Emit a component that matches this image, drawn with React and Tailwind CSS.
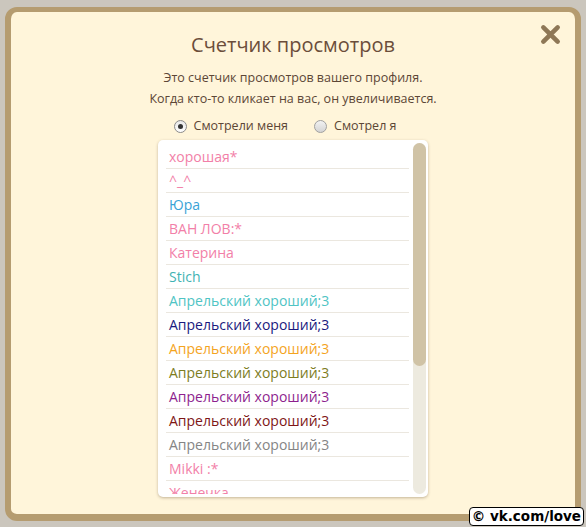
export default function App() {
  const rows = [
    ["хорошая*", "text-[#f27fa8]"],
    ["^_^", "text-[#f27fa8]"],
    ["Юра", "text-[#3aa3d6]"],
    ["ВАН ЛОВ:*", "text-[#f27fa8]"],
    ["Катерина", "text-[#f27fa8]"],
    ["Stich", "text-[#3fb3b3]"],
    ["Апрельский хороший;3", "text-[#4fc4c4]"],
    ["Апрельский хороший;3", "text-[#1a1a7e]"],
    ["Апрельский хороший;3", "text-[#f4a41e]"],
    ["Апрельский хороший;3", "text-[#7d7d1e]"],
    ["Апрельский хороший;3", "text-[#8e1f8e]"],
    ["Апрельский хороший;3", "text-[#7e1616]"],
    ["Апрельский хороший;3", "text-[#858585]"],
    ["Mikki :*", "text-[#f27fa8]"],
    ["Женечка", "text-[#f27fa8]"],
  ];
  return (
    <div
      className="relative w-[586px] h-[527px] overflow-hidden bg-[#cbc6bd] pt-[7px] pl-[5px]"
      style={{ fontFamily: '"Open Sans", "Noto Sans", sans-serif' }}
    >
      <div className="relative w-[576px] h-[514px] rounded-[12px] border-[6px] border-t-[5px] border-b-[7px] border-[#b59c70] bg-[#fff5da] flex flex-col items-center">
        <button className="absolute right-[13px] top-[10px] w-[24px] h-[24px] flex items-center justify-center">
          <svg width="21" height="21" viewBox="0 0 22 22">
            <path d="M3.5 3.5 L18.5 18.5 M18.5 3.5 L3.5 18.5" stroke="#8e7756" strokeWidth="4.8" strokeLinecap="round" />
          </svg>
        </button>
        <h1 className="mt-[19px] text-[20px] leading-[28px] text-[#6b4d3a]">Счетчик просмотров</h1>
        <p className="mt-[8px] text-[12.5px] leading-[21px] text-[#5c4636] text-center">
          Это счетчик просмотров вашего профиля.
          <br />
          Когда кто-то кликает на вас, он увеличивается.
        </p>
        <div className="mt-[7px] mr-[16px] flex items-center text-[12.5px] leading-[20px] text-[#5c4636]">
          <label className="flex items-center gap-[7px]">
            <span className="w-[13px] h-[13px] rounded-full border border-[#8a8a8a] bg-gradient-to-b from-[#e8e8e8] to-white flex items-center justify-center">
              <span className="w-[5px] h-[5px] rounded-full bg-[#333]" />
            </span>
            Смотрели меня
          </label>
          <label className="ml-[26px] flex items-center gap-[7px]">
            <span className="w-[13px] h-[13px] rounded-full border border-[#a0a0a0] bg-gradient-to-b from-[#f2f2f2] to-[#d4d4d4]" />
            Смотрел я
          </label>
        </div>
        <div className="mt-[4px] w-[270px] h-[357px] rounded-[5px] bg-white shadow-[0_1px_3px_rgba(120,100,70,0.45)] flex pl-[8px] pr-[2px] pt-[3px] pb-[3px]">
          <div className="flex-1 overflow-hidden pt-[2px]">
            {rows.map(([t, c], i) => (
              <div key={i} className={`h-[24px] border-b border-[#ebe7df] pl-[3px] text-[14px] leading-[23px] whitespace-nowrap ${c}`}>
                {t}
              </div>
            ))}
          </div>
          <div className="ml-[4px] w-[13px] rounded-[7px] bg-[#edeadf] flex flex-col">
            <div className="h-[223px] rounded-[7px] bg-[#d0c3a6]" />
          </div>
        </div>
      </div>
      <div
        className="absolute right-[2px] bottom-[1px] h-[19px] px-[2px] rounded-[4px] border border-black bg-white text-black text-[13.5px] leading-[17px] font-bold flex items-center"
        style={{ fontFamily: '"DejaVu Sans", Verdana, sans-serif' }}
      >
        © vk.com/love
      </div>
    </div>
  );
}
